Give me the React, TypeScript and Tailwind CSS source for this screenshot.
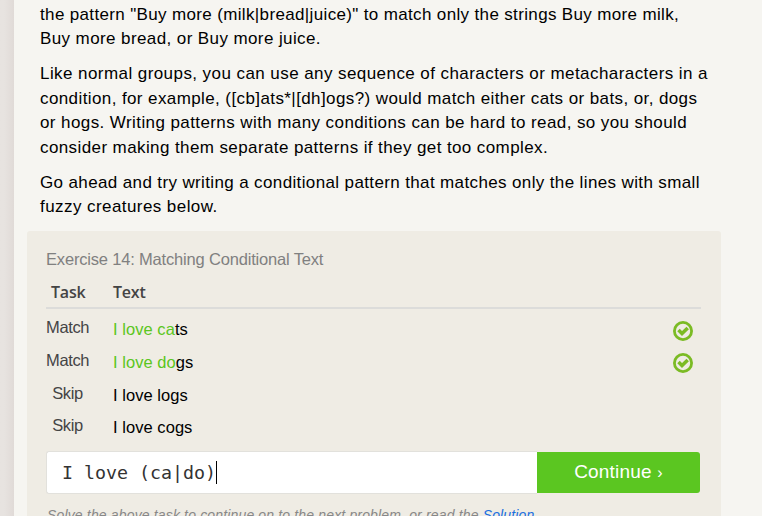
import React from "react";

type Row = { task: string; hit: string; rest: string; passed: boolean };

const rows: Row[] = [
  { task: "Match", hit: "I love ca", rest: "ts", passed: true },
  { task: "Match", hit: "I love do", rest: "gs", passed: true },
  { task: "Skip", hit: "", rest: "I love logs", passed: false },
  { task: "Skip", hit: "", rest: "I love cogs", passed: false },
];

type Line = { text: string; spacing: string };

const paragraphs: Line[][] = [
  [
    {
      text: 'the pattern "Buy more (milk|bread|juice)" to match only the strings Buy more milk,',
      spacing: "tracking-[0.35px]",
    },
    { text: "Buy more bread, or Buy more juice.", spacing: "tracking-[0.4px]" },
  ],
  [
    {
      text: "Like normal groups, you can use any sequence of characters or metacharacters in a",
      spacing: "tracking-[0.43px]",
    },
    {
      text: "condition, for example, ([cb]ats*|[dh]ogs?) would match either cats or bats, or, dogs",
      spacing: "tracking-[0.4px]",
    },
    {
      text: "or hogs. Writing patterns with many conditions can be hard to read, so you should",
      spacing: "tracking-[0.41px]",
    },
    {
      text: "consider making them separate patterns if they get too complex.",
      spacing: "tracking-[0.4px]",
    },
  ],
  [
    {
      text: "Go ahead and try writing a conditional pattern that matches only the lines with small",
      spacing: "tracking-[0.37px]",
    },
    { text: "fuzzy creatures below.", spacing: "tracking-[0.43px]" },
  ],
];

function CheckIcon() {
  return (
    <svg width="20" height="20" viewBox="0 0 20 20" fill="none" stroke="#7bbb24">
      <circle cx="10" cy="10" r="8.6" strokeWidth="2.8" />
      <path d="M5.5 9 L9 12.5 L14.7 6.9" strokeWidth="3.5" />
    </svg>
  );
}

export default function App() {
  return (
    <div className="flex h-[516px] w-[762px] overflow-hidden bg-[#f6f5f1] font-['Liberation_Sans',Arial,sans-serif]">
      <div className="w-[14px] shrink-0 bg-linear-to-r from-[#e7e3e0] from-30% to-[#e0dad7]" />
      <main className="w-[707px] shrink-0 pl-[13px]">
        <div className="space-y-[10.5px] pt-[2.7px] pl-[13px] text-[17px] leading-[24.5px] text-black">
          {paragraphs.map((lines) => (
            <p key={lines[0].text}>
              {lines.map((line) => (
                <span key={line.text} className={`block whitespace-nowrap ${line.spacing}`}>
                  {line.text}
                </span>
              ))}
            </p>
          ))}
        </div>
        <section className="mt-[11.3px] h-[310px] rounded-[3px] bg-[#efece4] pt-[18px] pr-[20px] pl-[19px]">
          <h2 className="h-[22px] text-[16.5px] leading-[20px] tracking-[-0.18px] text-[#808080]">
            Exercise 14: Matching Conditional Text
          </h2>
          <div className="flex h-[38px] border-b-2 border-[#dcdcda] pt-[10px] font-['Open_Sans',sans-serif] text-[16px] leading-[22px] font-semibold text-[#444]">
            <span className="w-[62px] translate-x-[5px] tracking-[-0.2px]">Task</span>
            <span className="pl-[5px] tracking-[-0.2px]">Text</span>
          </div>
          <div className="pt-[4.2px]">
            {rows.map((row, i) => (
              <div key={i} className="flex h-[32.7px] items-start">
                <span className="w-[43px] pt-[3px] text-center text-[16.5px] leading-[22px] tracking-[-0.35px] text-[#444]">
                  {row.task}
                </span>
                <span className="flex-1 pt-[5px] pl-[24px] text-[16.5px] leading-[22px] tracking-[0.05px] whitespace-pre text-black">
                  <span className="text-[#5bc621]">{row.hit}</span>
                  {row.rest}
                </span>
                {row.passed && (
                  <span className="mt-[7.4px] mr-[8px]">
                    <CheckIcon />
                  </span>
                )}
              </div>
            ))}
          </div>
          <div className="mt-[7px] flex h-[43px] w-[655px]">
            <div className="flex w-[491px] items-center rounded-l-[3px] border border-r-0 border-[#e2e1dc] bg-white pl-[15px] font-['DejaVu_Sans_Mono',monospace] text-[18.3px] text-[#333]">
              <span className="whitespace-pre">I love (ca|do)</span>
              <span className="h-[23px] w-px bg-black" />
            </div>
            <button className="my-px w-[163px] rounded-r-[3px] bg-[#5bc621] text-[19px] tracking-[0.2px] text-white">
              Continue <span className="text-[16px]">›</span>
            </button>
          </div>
          <p className="mt-[10px] pl-px text-[14px] leading-[22px] tracking-[0.155px] whitespace-nowrap text-[#888] italic">
            Solve the above task to continue on to the next problem, or read the{" "}
            <a className="text-[#1a6fe0]">Solution</a>.
          </p>
        </section>
      </main>
    </div>
  );
}
